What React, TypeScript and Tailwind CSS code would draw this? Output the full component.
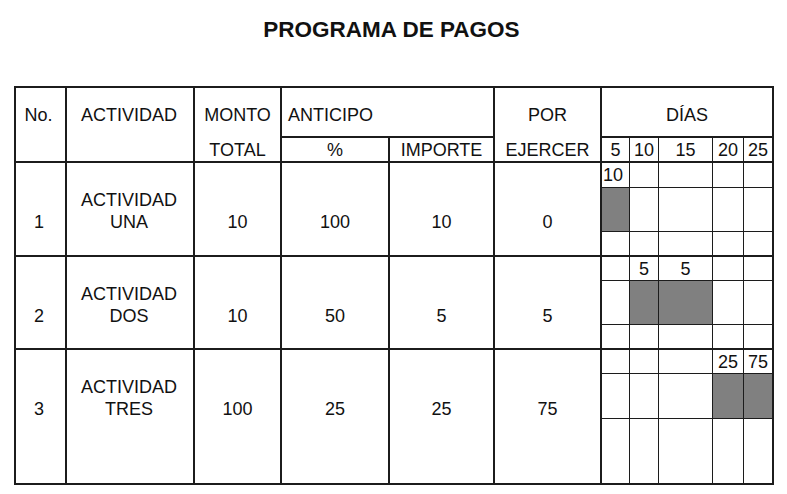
import React from "react";

const colStart = [
  "col-start-1",
  "col-start-2",
  "col-start-3",
  "col-start-4",
  "col-start-5",
  "col-start-6",
  "col-start-7",
  "col-start-8",
  "col-start-9",
  "col-start-10",
  "col-start-11",
];
const rowStart = [
  "row-start-1",
  "row-start-2",
  "row-start-3",
  "row-start-4",
  "row-start-5",
  "row-start-6",
  "row-start-7",
  "row-start-8",
  "row-start-9",
  "row-start-10",
  "row-start-11",
];

type Row = {
  no: string;
  act: [string, string];
  monto: string;
  pct: string;
  imp: string;
  por: string;
  gray: number[];
  vals: Record<number, string>;
};

const rows: Row[] = [
  { no: "1", act: ["ACTIVIDAD", "UNA"], monto: "10", pct: "100", imp: "10", por: "0", gray: [0], vals: { 0: "10" } },
  { no: "2", act: ["ACTIVIDAD", "DOS"], monto: "10", pct: "50", imp: "5", por: "5", gray: [1, 2], vals: { 1: "5", 2: "5" } },
  { no: "3", act: ["ACTIVIDAD", "TRES"], monto: "100", pct: "25", imp: "25", por: "75", gray: [3, 4], vals: { 3: "25", 4: "75" } },
];

const days = ["5", "10", "15", "20", "25"];

const B = "border-[#1c1c1c]";

export default function App() {
  return (
    <div
      className="w-[787px] h-[494px] bg-white text-[#111] overflow-hidden"
      style={{ fontFamily: '"Liberation Sans", Arial, sans-serif' }}
    >
      <h1 className="pt-[17px] pr-[4px] text-center text-[22.5px] leading-[26px] font-bold">PROGRAMA DE PAGOS</h1>
      <div className="mt-[43px] ml-[14px]">
        <div
          className={`grid w-[760px] border-l-2 border-t-2 ${B} grid-cols-[51px_128px_87px_108px_105px_107px_28px_29px_54px_31px_30px] grid-rows-[50px_25px_25px_44px_25px_24px_44px_25px_24px_45px_66px] text-[18px] leading-[22px]`}
        >
          {/* Header */}
          <div className={`col-start-1 row-start-1 row-span-2 border-r-2 border-b-2 ${B} pt-[16px] pr-[4px] text-center`}>No.</div>
          <div className={`col-start-2 row-start-1 row-span-2 border-r-2 border-b-2 ${B} pt-[16px] pr-[2px] text-center`}>ACTIVIDAD</div>
          <div className={`col-start-3 row-start-1 border-r-2 ${B} pt-[16px] text-center`}>MONTO</div>
          <div className={`col-start-3 row-start-2 border-r-2 border-b-2 ${B} flex items-center justify-center`}>TOTAL</div>
          <div className={`col-start-4 col-span-2 row-start-1 border-r-2 border-b-2 ${B} pt-[16px] pl-[6px]`}>ANTICIPO</div>
          <div className={`col-start-4 row-start-2 border-r-2 border-b-2 ${B} flex items-center justify-center`}>%</div>
          <div className={`col-start-5 row-start-2 border-r-2 border-b-2 ${B} flex items-center justify-center`}>IMPORTE</div>
          <div className={`col-start-6 row-start-1 border-r-2 ${B} pt-[16px] text-center`}>POR</div>
          <div className={`col-start-6 row-start-2 border-r-2 border-b-2 ${B} flex items-center justify-center`}>EJERCER</div>
          <div className={`col-start-7 col-span-5 row-start-1 border-r-2 border-b-2 ${B} pt-[16px] text-center`}>DÍAS</div>
          {days.map((d, i) => (
            <div
              key={d}
              className={`${colStart[6 + i]} row-start-2 border-b-2 ${i === 4 ? "border-r-2" : "border-r"} ${B} flex items-center justify-center`}
            >
              {d}
            </div>
          ))}

          {/* Body */}
          {rows.map((r, ri) => {
            const rs = rowStart[2 + ri * 3];
            const main = `${rs} row-span-3 border-r-2 border-b-2 ${B} pt-[48px] text-center`;
            return (
              <React.Fragment key={r.no}>
                <div className={`col-start-1 ${main} pr-[3px]`}>{r.no}</div>
                <div className={`col-start-2 ${rs} row-span-3 border-r-2 border-b-2 ${B} pt-[26px] pr-[2px] text-center`}>
                  <div>{r.act[0]}</div>
                  <div>{r.act[1]}</div>
                </div>
                <div className={`col-start-3 ${main}`}>{r.monto}</div>
                <div className={`col-start-4 ${main}`}>{r.pct}</div>
                <div className={`col-start-5 ${main}`}>{r.imp}</div>
                <div className={`col-start-6 ${main}`}>{r.por}</div>
                {[0, 1, 2].map((s) =>
                  [0, 1, 2, 3, 4].map((c) => {
                    const isGray = s === 1 && r.gray.includes(c);
                    const val = s === 0 ? r.vals[c] : undefined;
                    const leftAlign = ri === 0 && c === 0;
                    return (
                      <div
                        key={`${s}-${c}`}
                        className={`${colStart[6 + c]} ${rowStart[2 + ri * 3 + s]} ${c === 4 ? "border-r-2" : "border-r"} ${s === 2 ? "border-b-2" : "border-b"} ${B} ${isGray ? "bg-[#808080]" : ""} flex items-center ${leftAlign ? "justify-start pl-[1px]" : "justify-center"}`}
                      >
                        {val}
                      </div>
                    );
                  })
                )}
              </React.Fragment>
            );
          })}
        </div>
      </div>
    </div>
  );
}
